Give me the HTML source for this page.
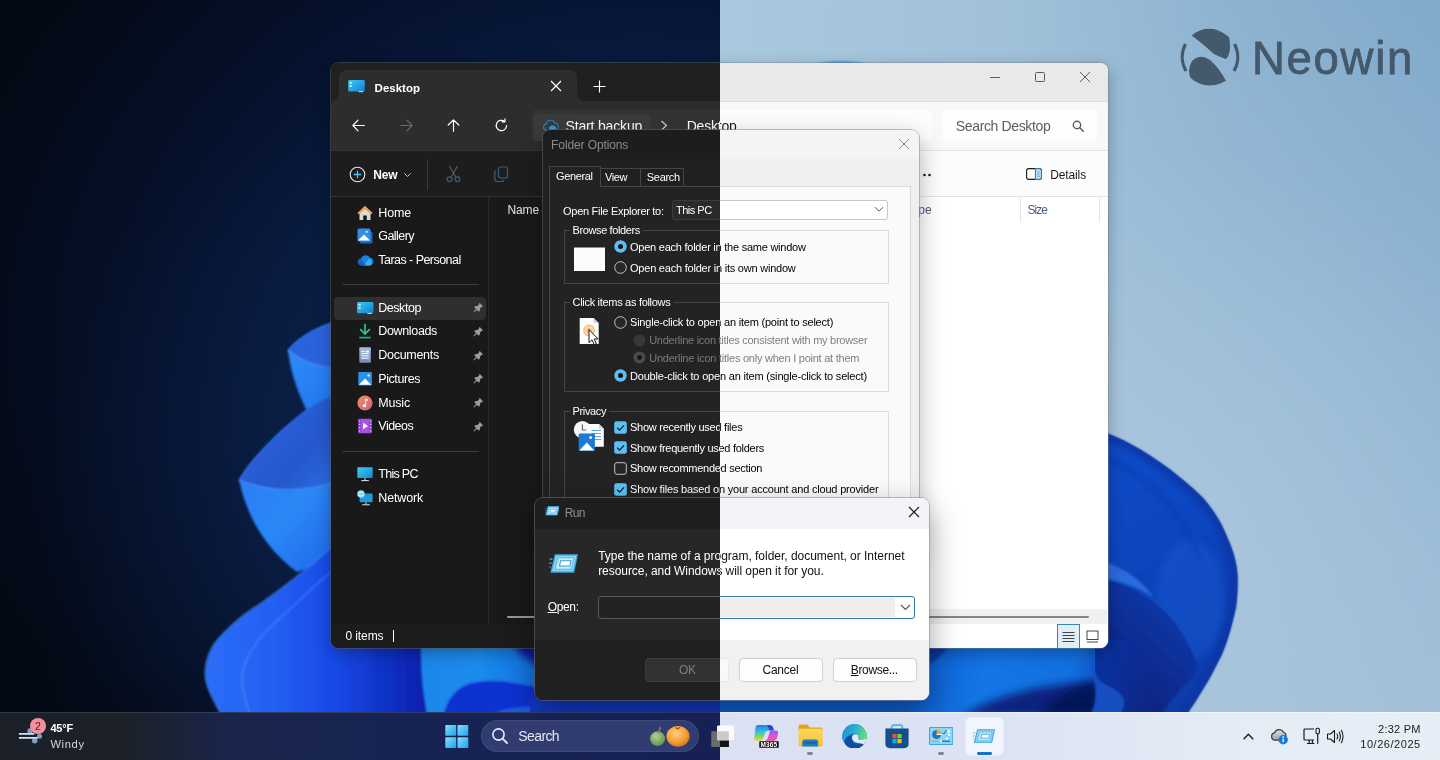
<!DOCTYPE html>
<html lang="en"><head><meta charset="utf-8"><title>Windows 11 dark and light mode dialogs</title>
<style>
html,body{margin:0;padding:0;background:#000;}
body{width:1440px;height:760px;overflow:hidden;position:relative;font-family:"Liberation Sans",sans-serif;}
.half{position:absolute;top:0;height:760px;width:720px;overflow:hidden;}
.half>.sc{position:absolute;top:0;width:1440px;height:760px;will-change:transform;}
.sc div,.sc svg{position:absolute;}
.sc div div{position:absolute;}
.t{white-space:nowrap;}
u{text-decoration:underline;text-underline-offset:1px;}
</style></head><body>
<div class="half" style="left:0"><div class="sc" style="left:0">
<div style="left:0px;top:0px;width:1440px;height:760px;background:radial-gradient(ellipse 300px 400px at 330px 520px,rgba(13,38,84,.55) 0%,rgba(13,38,84,.25) 50%,rgba(13,38,84,0) 100%),radial-gradient(ellipse 700px 580px at 640px 340px,#0c2452 0%,#0a1f47 30%,#08193b 50%,#061330 65%,#040d20 85%,#030915 100%);"></div>
<svg style="left:0px;top:0px;" width="1440" height="760" viewBox="0 0 1440 760">
<defs>
<linearGradient id="dA" gradientUnits="userSpaceOnUse" x1="205" y1="0" x2="425" y2="0"><stop offset="0" stop-color="#2b6ef7"/><stop offset="0.3" stop-color="#2360f3"/><stop offset="0.6" stop-color="#1748e6"/><stop offset="1" stop-color="#0920ac"/></linearGradient>
<linearGradient id="dB" gradientUnits="userSpaceOnUse" x1="235" y1="470" x2="340" y2="560"><stop offset="0" stop-color="#2a7df6"/><stop offset="0.5" stop-color="#2b88f6"/><stop offset="1" stop-color="#2068ea"/></linearGradient>
<linearGradient id="dBi" gradientUnits="userSpaceOnUse" x1="250" y1="410" x2="340" y2="490"><stop offset="0" stop-color="#2a62e0"/><stop offset="0.6" stop-color="#2858cc"/><stop offset="1" stop-color="#2a70ea"/></linearGradient>
<linearGradient id="dC" gradientUnits="userSpaceOnUse" x1="285" y1="350" x2="340" y2="430"><stop offset="0" stop-color="#2f8af8"/><stop offset="1" stop-color="#2272ee"/></linearGradient>
<linearGradient id="dD" gradientUnits="userSpaceOnUse" x1="420" y1="0" x2="540" y2="0"><stop offset="0" stop-color="#1a86ea"/><stop offset="0.5" stop-color="#1a8cec"/><stop offset="1" stop-color="#176fe2"/></linearGradient>
<filter id="b1" x="-5%" y="-5%" width="110%" height="110%"><feGaussianBlur stdDeviation="0.8"/></filter>
<filter id="b3" x="-10%" y="-10%" width="120%" height="120%"><feGaussianBlur stdDeviation="3"/></filter>
</defs>
<!-- top petal -->
<path d="M288 350 C292 386 310 426 340 455 L340 320 C318 326 300 336 288 350 Z" fill="url(#dC)" filter="url(#b1)"/>
<path d="M288 350 C300 336 318 327 340 321 L340 368 C320 368 302 362 288 350 Z" fill="#2a62dc" filter="url(#b1)"/>
<path d="M288 350 C302 362 320 368 340 368" fill="none" stroke="#4d9bff" stroke-width="1.2" opacity=".8" filter="url(#b1)"/>
<!-- middle petal -->
<path d="M239 480 C246 512 262 546 297 572 L340 560 L340 400 L312 406 C285 426 256 452 239 480 Z" fill="url(#dB)" filter="url(#b1)"/>
<path d="M239 480 C256 452 285 426 312 406 C322 400 332 396 340 394 L340 480 C305 494 268 492 239 480 Z" fill="url(#dBi)" filter="url(#b1)"/>
<path d="M239 480 C268 492 305 494 340 480" fill="none" stroke="#56a0ff" stroke-width="1.2" opacity=".8" filter="url(#b1)"/>
<!-- bottom petal + under-window -->
<path d="M345.0 540.0 C342.7 541.3 338.7 542.2 331.0 548.0 C323.3 553.8 309.8 566.3 299.0 575.0 C288.2 583.7 276.2 592.5 266.0 600.0 C255.8 607.5 247.0 612.0 238.0 620.0 C229.0 628.0 217.3 638.0 212.0 648.0 C206.7 658.0 204.3 668.7 206.0 680.0 C207.7 691.3 219.3 710.0 222.0 716.0 L430 716 L430 640 L345 640 Z" fill="url(#dA)" filter="url(#b1)"/>
<path d="M345.0 563.0 C342.8 564.3 341.2 563.3 332.0 571.0 C322.8 578.7 302.5 597.2 290.0 609.0 C277.5 620.8 265.0 630.8 257.0 642.0 C249.0 653.2 243.2 663.7 242.0 676.0 C240.8 688.3 248.7 709.3 250.0 716.0" fill="none" stroke="#5a9dff" stroke-opacity=".5" stroke-width="1.6" filter="url(#b1)"/>
<path d="M345.0 540.0 C342.7 541.3 338.7 542.2 331.0 548.0 C323.3 553.8 309.8 566.3 299.0 575.0 C288.2 583.7 276.2 592.5 266.0 600.0 C255.8 607.5 247.0 612.0 238.0 620.0 C229.0 628.0 217.3 638.0 212.0 648.0 C206.7 658.0 204.3 668.7 206.0 680.0 C207.7 691.3 219.3 710.0 222.0 716.0" fill="none" stroke="#4b93ff" stroke-opacity=".7" stroke-width="1.4" filter="url(#b1)"/>
<!-- cyan petal under window -->
<path d="M421 640 C420 665 422 690 427 716 L545 716 L545 640 Z" fill="url(#dD)" filter="url(#b1)"/>
<path d="M443 716 C446 700 455 688 470 683 C492 677 515 682 545 688 L545 716 Z" fill="#0d33d2" filter="url(#b1)"/>
<path d="M443 716 C446 700 455 688 470 683 C492 677 515 682 545 688" fill="none" stroke="#3f8df5" stroke-width="1.2" opacity=".8" filter="url(#b1)"/>
<path d="M492 716 C498 709 510 706 545 706 L545 716 Z" fill="#1a5ae0" filter="url(#b1)"/>
<path d="M512 640 L545 640 L545 668 C530 664 518 654 512 640 Z" fill="#0b22a4" filter="url(#b3)"/>
<rect x="530" y="698" width="190" height="18" fill="#1238c4"/>
</svg>
<div style="left:331px;top:63px;width:777px;height:585px;background:#191919;border-radius:8px;box-shadow:0 0 0 1px rgba(90,90,90,.55),0 5px 16px rgba(0,0,0,.30);"></div>
<div style="left:331px;top:63px;width:777px;height:585px;border-radius:8px;overflow:hidden;"><div style="left:0px;top:0px;width:777px;height:38px;background:#202020;"></div>
<div style="left:0px;top:38px;width:777px;height:49px;background:#2d2d2d;"></div>
<div style="left:0px;top:87px;width:777px;height:1px;background:#333333;"></div>
<div style="left:0px;top:88px;width:777px;height:45px;background:#1d1d1d;"></div>
<div style="left:0px;top:133px;width:777px;height:1px;background:#333333;"></div>
<div style="left:0px;top:134px;width:777px;height:427px;background:#191919;"></div>
<div style="left:0px;top:561px;width:777px;height:24px;background:#1c1c1c;"></div>
</div>
<div style="left:339px;top:70px;width:238px;height:31px;background:#2d2d2d;border-radius:8px 8px 0 0;"></div>
<svg style="left:331px;top:93px;" width="8" height="8" viewBox="0 0 8 8"><path d="M8 0 L8 8 L0 8 A8 8 0 0 0 8 0Z" fill="#2d2d2d"/></svg>
<svg style="left:577px;top:93px;" width="8" height="8" viewBox="0 0 8 8"><path d="M0 0 L0 8 L8 8 A8 8 0 0 1 0 0Z" fill="#2d2d2d"/></svg>
<svg style="left:348px;top:80px;" width="17" height="12.5" viewBox="0 0 16 12"><defs><linearGradient id="gdk34880" x1="0" y1="0" x2="1" y2="1"><stop offset="0" stop-color="#3ccbf4"/><stop offset="1" stop-color="#0f7fd0"/></linearGradient></defs>
<rect x="0" y="0" width="16" height="11" rx="1.5" fill="url(#gdk34880)"/><rect x="1.5" y="2" width="2" height="1.6" fill="#dff6ff"/><rect x="1.5" y="5" width="2" height="1.6" fill="#dff6ff"/><rect x="10" y="10.5" width="4.5" height="1.2" fill="#9fdcf6"/></svg>
<div class="t" style="left:374.6px;top:77.6px;line-height:20px;font-size:11.5px;font-weight:700;color:#fff;letter-spacing:0.00px;">Desktop</div>
<svg style="left:550px;top:80px;" width="12" height="12" viewBox="0 0 12 12"><path d="M1 1 L11 11 M11 1 L1 11" stroke="#fff" stroke-width="1.2" fill="none"/></svg>
<svg style="left:593px;top:80px;" width="13" height="13" viewBox="0 0 13 13"><path d="M6.5 0.5 V12.5 M0.5 6.5 H12.5" stroke="#fff" stroke-width="1.1" fill="none"/></svg>
<svg style="left:352px;top:119px;" width="13" height="13" viewBox="0 0 13 13"><path d="M12.3 6.5 H1.2 M6 1.2 L0.9 6.5 L6 11.8" stroke="#fff" stroke-width="1.2" fill="none" stroke-linecap="round" stroke-linejoin="round"/></svg>
<svg style="left:400px;top:119px;" width="13" height="13" viewBox="0 0 13 13"><path d="M0.7 6.5 H11.8 M7 1.2 L12.1 6.5 L7 11.8" stroke="#6a6a6a" stroke-width="1.2" fill="none" stroke-linecap="round" stroke-linejoin="round"/></svg>
<svg style="left:446.8px;top:118.8px;" width="13" height="13" viewBox="0 0 13 13"><path d="M6.5 12.3 V1.2 M1.2 6 L6.5 0.9 L11.8 6" stroke="#fff" stroke-width="1.2" fill="none" stroke-linecap="round" stroke-linejoin="round"/></svg>
<svg style="left:494px;top:118px;" width="15" height="15" viewBox="0 0 15 15"><path d="M12.6 7.6 A5.2 5.2 0 1 1 10.6 3.4 M11 0.9 V3.8 H8.1" stroke="#fff" stroke-width="1.2" fill="none" stroke-linecap="round" stroke-linejoin="round"/></svg>
<div style="left:532px;top:110px;width:188px;height:31px;background:#343434;border-radius:4px 0 0 4px;"></div>
<div style="left:534px;top:114px;width:117px;height:27px;background:#3b3b3b;border-radius:4px;"></div>
<svg style="left:542px;top:118.5px;" width="19" height="13" viewBox="0 0 19 13"><path d="M5 11.2 H4.2 A3.2 3.2 0 0 1 4.2 4.900 A4.600 4.600 0 0 1 13 4.200 A3.400 3.400 0 0 1 15.4 10" stroke="#2c7fbc" stroke-width="1.2" fill="none" stroke-linecap="round"/><circle cx="10.6" cy="10" r="3.600" fill="#3596d8"/></svg>
<div class="t" style="left:565.5px;top:115.5px;line-height:20px;font-size:14px;color:#fff;letter-spacing:-0.16px;">Start backup</div>
<svg style="left:660px;top:120px;" width="8" height="11" viewBox="0 0 8 11"><path d="M1.5 1 L6.5 5.5 L1.5 10" stroke="#d0d0d0" stroke-width="1.2" fill="none"/></svg>
<div class="t" style="left:686.7px;top:115.5px;line-height:20px;font-size:14px;color:#fff;letter-spacing:-0.19px;">Desktop</div>
<svg style="left:349px;top:165.5px;" width="17" height="17" viewBox="0 0 17 17"><circle cx="8.5" cy="8.5" r="7.3" stroke="#e8e8e8" stroke-width="1.1" fill="none"/><path d="M8.5 4.8 V12.2 M4.8 8.5 H12.2" stroke="#4cc2ff" stroke-width="1.3"/></svg>
<div class="t" style="left:373.2px;top:165.2px;line-height:20px;font-size:12px;font-weight:700;color:#fff;letter-spacing:-0.16px;">New</div>
<svg style="left:403px;top:171.5px;" width="9" height="7" viewBox="0 0 9 7"><path d="M1.5 1.5 L4.500 4.500 L7.500 1.5" stroke="#c8c8c8" stroke-width="1" fill="none"/></svg>
<div style="left:427px;top:159px;width:1px;height:31px;background:#3a3a3a;"></div>
<svg style="left:445px;top:165px;" width="17" height="18" viewBox="0 0 17 18"><path d="M4.5 1 L11 12.5 M12.5 1 L6 12.5" stroke="#5b5f63" stroke-width="1.1" fill="none"/><circle cx="4.6" cy="14.2" r="2.4" stroke="#2c6384" stroke-width="1.2" fill="none"/><circle cx="12.4" cy="14.2" r="2.4" stroke="#2c6384" stroke-width="1.2" fill="none"/></svg>
<svg style="left:493px;top:166px;" width="17" height="17" viewBox="0 0 17 17"><rect x="5.5" y="1" width="9" height="11" rx="2" stroke="#2c6384" stroke-width="1.2" fill="none"/><path d="M3.5 4.5 A2 2 0 0 0 1.8 6.5 V13 A2.5 2.5 0 0 0 4.3 15.5 H9 A2 2 0 0 0 11 14" stroke="#585858" stroke-width="1.2" fill="none"/></svg>
<div style="left:488px;top:197px;width:1px;height:427px;background:#2a2a2a;"></div>
<div style="left:334px;top:296.5px;width:152px;height:23px;background:#2f2f2f;border-radius:4px;"></div>
<div style="left:342px;top:284px;width:137px;height:1px;background:#3a3a3a;"></div>
<div style="left:342px;top:450.5px;width:137px;height:1px;background:#3a3a3a;"></div>
<div class="t" style="left:378.3px;top:202.5px;line-height:20px;font-size:12.5px;color:#fff;letter-spacing:-0.16px;">Home</div>
<svg style="left:357px;top:204.5px;" width="16" height="16" viewBox="0 0 16 16"><path d="M8 1 L15.5 8 L14 9.3 L8 3.8 L2 9.3 L0.5 8 Z" fill="#e8964a"/><path d="M2.5 8.3 L8 3.4 L13.5 8.3 V15 H9.8 V10.5 H6.2 V15 H2.5 Z" fill="#d9d9d9"/><path d="M8 1 L15.5 8 L14 9.3 L8 3.8 L2 9.3 L0.5 8 Z" fill="#ee9c50"/></svg>
<div class="t" style="left:378.3px;top:226.3px;line-height:20px;font-size:12.5px;color:#fff;letter-spacing:-0.57px;">Gallery</div>
<svg style="left:357px;top:228.3px;" width="16" height="16" viewBox="0 0 16 16"><rect x="3" y="3.5" width="12.5" height="12" rx="1.5" fill="#2560b8"/><rect x="0.5" y="0.5" width="13" height="13" rx="1.5" fill="#2d8fe6"/><path d="M1 12.5 L7 6.5 L13 12.5 Z" fill="#fff"/><circle cx="9.7" cy="3.8" r="1.1" fill="#e6f4ff"/></svg>
<div class="t" style="left:378.3px;top:250px;line-height:20px;font-size:12.5px;color:#fff;letter-spacing:-0.54px;">Taras - Personal</div>
<svg style="left:357px;top:252px;" width="17" height="16" viewBox="0 0 17 16"><path d="M4.3 13.5 A3.6 3.6 0 0 1 3.9 6.4 A5 5 0 0 1 12.8 5.6 A4 4 0 0 1 12.9 13.5 Z" fill="#1f7fe0"/><path d="M7 13.5 L12 6.5 A4.2 4.2 0 0 1 13 13.5 Z" fill="#35b6f6"/><path d="M4.3 13.5 A3.4 3.4 0 0 1 3.6 7.2 L9.5 13.5 Z" fill="#1560c8"/></svg>
<div class="t" style="left:378.3px;top:297.6px;line-height:20px;font-size:12.5px;color:#fff;letter-spacing:-0.47px;">Desktop</div>
<svg style="left:472.5px;top:302.1px;" width="11" height="11" viewBox="0 0 11 11"><path d="M6.5 0.8 L10.2 4.5 L8.6 5 L7 6.6 L6.8 9 L5.6 9.6 L3.9 7.9 L1 10.6 L0.4 10 L3.1 7.1 L1.4 5.4 L2 4.2 L4.4 4 L6 2.4 Z" fill="#9b9b9b"/></svg>
<svg style="left:357px;top:301.6px;" width="16.5" height="12.4" viewBox="0 0 16 12"><defs><linearGradient id="gdk357301.6" x1="0" y1="0" x2="1" y2="1"><stop offset="0" stop-color="#3ccbf4"/><stop offset="1" stop-color="#0f7fd0"/></linearGradient></defs>
<rect x="0" y="0" width="16" height="11" rx="1.5" fill="url(#gdk357301.6)"/><rect x="1.5" y="2" width="2" height="1.6" fill="#dff6ff"/><rect x="1.5" y="5" width="2" height="1.6" fill="#dff6ff"/><rect x="10" y="10.5" width="4.5" height="1.2" fill="#9fdcf6"/></svg>
<div class="t" style="left:378.3px;top:321.4px;line-height:20px;font-size:12.5px;color:#fff;letter-spacing:-0.35px;">Downloads</div>
<svg style="left:472.5px;top:325.9px;" width="11" height="11" viewBox="0 0 11 11"><path d="M6.5 0.8 L10.2 4.5 L8.6 5 L7 6.6 L6.8 9 L5.6 9.6 L3.9 7.9 L1 10.6 L0.4 10 L3.1 7.1 L1.4 5.4 L2 4.2 L4.4 4 L6 2.4 Z" fill="#9b9b9b"/></svg>
<svg style="left:357px;top:323.4px;" width="16" height="16" viewBox="0 0 16 16"><path d="M8 0.8 V10.5 M3.2 6.2 L8 11 L12.8 6.2" stroke="#2dc49a" stroke-width="1.7" fill="none"/><path d="M2.3 14.6 H13.7" stroke="#2aa886" stroke-width="1.7"/></svg>
<div class="t" style="left:378.3px;top:345.2px;line-height:20px;font-size:12.5px;color:#fff;letter-spacing:-0.29px;">Documents</div>
<svg style="left:472.5px;top:349.7px;" width="11" height="11" viewBox="0 0 11 11"><path d="M6.5 0.8 L10.2 4.5 L8.6 5 L7 6.6 L6.8 9 L5.6 9.6 L3.9 7.9 L1 10.6 L0.4 10 L3.1 7.1 L1.4 5.4 L2 4.2 L4.4 4 L6 2.4 Z" fill="#9b9b9b"/></svg>
<svg style="left:357px;top:347.2px;" width="16" height="16" viewBox="0 0 16 16"><defs><linearGradient id="gdoc" x1="0" y1="0" x2="0" y2="1"><stop offset="0" stop-color="#a9bcd8"/><stop offset="1" stop-color="#6f8db8"/></linearGradient></defs><rect x="2.3" y="0.3" width="11.6" height="15.4" rx="1" fill="url(#gdoc)"/><path d="M4.3 4.3 H8.2 M4.3 6.6 H11.8 M4.3 8.9 H11.8 M4.3 11.2 H11.8" stroke="#fff" stroke-width="1"/><rect x="9" y="3.6" width="2.8" height="1.8" fill="#fff"/></svg>
<div class="t" style="left:378.3px;top:368.9px;line-height:20px;font-size:12.5px;color:#fff;letter-spacing:-0.43px;">Pictures</div>
<svg style="left:472.5px;top:373.4px;" width="11" height="11" viewBox="0 0 11 11"><path d="M6.5 0.8 L10.2 4.5 L8.6 5 L7 6.6 L6.8 9 L5.6 9.6 L3.9 7.9 L1 10.6 L0.4 10 L3.1 7.1 L1.4 5.4 L2 4.2 L4.4 4 L6 2.4 Z" fill="#9b9b9b"/></svg>
<svg style="left:357px;top:370.9px;" width="16" height="16" viewBox="0 0 16 16"><rect x="1.3" y="1" width="13.6" height="13.6" rx="1.3" fill="#2a92e8"/><path d="M2 13.8 L8 7.6 L14.2 13.8 Z" fill="#fff"/><circle cx="11.6" cy="4.4" r="1.2" fill="#e4f3ff"/></svg>
<div class="t" style="left:378.3px;top:392.6px;line-height:20px;font-size:12.5px;color:#fff;letter-spacing:-0.19px;">Music</div>
<svg style="left:472.5px;top:397.1px;" width="11" height="11" viewBox="0 0 11 11"><path d="M6.5 0.8 L10.2 4.5 L8.6 5 L7 6.6 L6.8 9 L5.6 9.6 L3.9 7.9 L1 10.6 L0.4 10 L3.1 7.1 L1.4 5.4 L2 4.2 L4.4 4 L6 2.4 Z" fill="#9b9b9b"/></svg>
<svg style="left:357px;top:394.6px;" width="16" height="16" viewBox="0 0 16 16"><defs><linearGradient id="gmu" x1="0" y1="0" x2="1" y2="1"><stop offset="0" stop-color="#f09060"/><stop offset="1" stop-color="#d0608a"/></linearGradient></defs><circle cx="8" cy="8" r="7.6" fill="url(#gmu)"/><path d="M8.3 3.6 L11 4.6 V6 L9.1 5.3 V10.8 A1.7 1.5 0 1 1 8.3 9.5 Z" fill="#fff"/></svg>
<div class="t" style="left:378.3px;top:416.3px;line-height:20px;font-size:12.5px;color:#fff;letter-spacing:-0.53px;">Videos</div>
<svg style="left:472.5px;top:420.8px;" width="11" height="11" viewBox="0 0 11 11"><path d="M6.5 0.8 L10.2 4.5 L8.6 5 L7 6.6 L6.8 9 L5.6 9.6 L3.9 7.9 L1 10.6 L0.4 10 L3.1 7.1 L1.4 5.4 L2 4.2 L4.4 4 L6 2.4 Z" fill="#9b9b9b"/></svg>
<svg style="left:357px;top:418.3px;" width="16" height="16" viewBox="0 0 16 16"><rect x="1.3" y="0.8" width="13.6" height="14.4" rx="1.5" fill="#a855e0"/><rect x="1.3" y="0.8" width="2.6" height="14.4" fill="#8a3cc8"/><rect x="12.3" y="0.8" width="2.6" height="14.4" fill="#8a3cc8"/><path d="M6 4.8 L11 8 L6 11.2 Z" fill="#fff"/><path d="M2.6 3 v.1 M2.6 6.3 v.1 M2.6 9.6 v.1 M2.6 12.9 v.1 M13.6 3 v.1 M13.6 6.3 v.1 M13.6 9.6 v.1 M13.6 12.9 v.1" stroke="#e8d0ff" stroke-width="1.1" stroke-linecap="square"/></svg>
<div class="t" style="left:378.3px;top:463.8px;line-height:20px;font-size:12.5px;color:#fff;letter-spacing:-0.71px;">This PC</div>
<svg style="left:357px;top:465.8px;" width="16" height="16" viewBox="0 0 16 16"><defs><linearGradient id="gpc" x1="0" y1="0" x2="1" y2="1"><stop offset="0" stop-color="#3fd0e8"/><stop offset="1" stop-color="#1585d8"/></linearGradient></defs><rect x="0.3" y="1.3" width="15.4" height="10.6" rx="0.8" fill="url(#gpc)"/><rect x="7.3" y="11.9" width="1.4" height="2.3" fill="#9ab"/><rect x="4.2" y="14" width="7.6" height="1.1" fill="#c8d4dc"/></svg>
<div class="t" style="left:378.3px;top:487.5px;line-height:20px;font-size:12.5px;color:#fff;letter-spacing:-0.15px;">Network</div>
<svg style="left:357px;top:489.5px;" width="16" height="16" viewBox="0 0 16 16"><rect x="2.6" y="3.6" width="13" height="8.6" rx="0.8" fill="#1e9be0"/><rect x="8.3" y="12.2" width="1.4" height="2.2" fill="#9ab"/><rect x="5.2" y="14.2" width="7.6" height="1.1" fill="#c8d4dc"/><circle cx="4" cy="4" r="3.8" fill="#8fd4f2"/><path d="M1.5 3 Q4 1 6.5 3 M1 5.2 Q4 7 7 5.2" stroke="#e8f8ff" stroke-width=".8" fill="none"/></svg>
<div class="t" style="left:507.5px;top:199.5px;line-height:20px;font-size:12px;color:#e4e4e4;letter-spacing:-0.13px;">Name</div>
<div style="left:507px;top:615.5px;width:30px;height:2px;background:#9a9a9a;border-radius:1px;"></div>
<div class="t" style="left:345.5px;top:626px;line-height:20px;font-size:12px;color:#fff;letter-spacing:-0.10px;">0 items</div>
<div style="left:393px;top:630px;width:1px;height:12px;background:#fff;"></div>
<div style="left:543px;top:130px;width:376px;height:420px;background:#202020;border-radius:8px;box-shadow:0 0 0 1px rgba(85,85,85,.7),0 8px 24px rgba(0,0,0,.3);overflow:hidden;"><div style="left:0px;top:0px;width:376px;height:29px;background:#1d1d1d;"></div>
</div>
<div style="left:549px;top:186.4px;width:362px;height:331px;background:#232323;box-sizing:border-box;border:1px solid #454545;"></div>
<div class="t" style="left:551.1px;top:134.8px;line-height:20px;font-size:12px;color:#8a8a8a;letter-spacing:-0.11px;">Folder Options</div>
<div style="left:549px;top:166px;width:52px;height:21.4px;background:#232323;box-sizing:border-box;border:1px solid #454545;border-bottom:none;"></div>
<div style="left:601px;top:168px;width:40px;height:18.4px;background:#202020;box-sizing:border-box;border:1px solid #454545;border-left:none;border-bottom:none;"></div>
<div style="left:641px;top:168px;width:43px;height:18.4px;background:#202020;box-sizing:border-box;border:1px solid #454545;border-left:none;border-bottom:none;"></div>
<div class="t" style="left:556px;top:165.8px;line-height:20px;font-size:11px;color:#ffffff;letter-spacing:-0.35px;">General</div>
<div class="t" style="left:605px;top:167.4px;line-height:20px;font-size:11px;color:#ffffff;letter-spacing:-0.39px;">View</div>
<div class="t" style="left:646.8px;top:167.4px;line-height:20px;font-size:11px;color:#ffffff;letter-spacing:-0.31px;">Search</div>
<div class="t" style="left:563.1px;top:200.5px;line-height:20px;font-size:11px;color:#ffffff;letter-spacing:-0.29px;">Open File Explorer to:</div>
<div style="left:672px;top:199.8px;width:216px;height:20px;background:#2a2a2a;box-sizing:border-box;border:1px solid #3d3d3d;border-radius:3px;"></div>
<div class="t" style="left:676px;top:199.8px;line-height:20px;font-size:11px;color:#ffffff;letter-spacing:-0.50px;">This PC</div>
<div style="left:563.5px;top:230px;width:325.5px;height:53.5px;box-sizing:border-box;border:1px solid #454545;"></div>
<div style="left:569.5px;top:228px;width:73.4px;height:5px;background:#232323;"></div>
<div class="t" style="left:572.5px;top:220.3px;line-height:20px;font-size:11px;color:#ffffff;letter-spacing:-0.38px;">Browse folders</div>
<div style="left:563.5px;top:302px;width:325.5px;height:89.5px;box-sizing:border-box;border:1px solid #454545;"></div>
<div style="left:569.5px;top:300px;width:104px;height:5px;background:#232323;"></div>
<div class="t" style="left:572.5px;top:292.3px;line-height:20px;font-size:11px;color:#ffffff;letter-spacing:-0.30px;">Click items as follows</div>
<div style="left:563.5px;top:410.5px;width:325.5px;height:109.5px;box-sizing:border-box;border:1px solid #454545;"></div>
<div style="left:569.5px;top:408.5px;width:39.7px;height:5px;background:#232323;"></div>
<div class="t" style="left:572.5px;top:400.8px;line-height:20px;font-size:11px;color:#ffffff;letter-spacing:-0.34px;">Privacy</div>
<svg style="left:614.0px;top:240.4px;" width="13" height="13" viewBox="0 0 13 13"><circle cx="6.5" cy="6.5" r="6.2" fill="#5cc0f5"/><circle cx="6.5" cy="6.5" r="2.5" fill="#101010"/></svg>
<div class="t" style="left:630px;top:236.9px;line-height:20px;font-size:11px;color:#ffffff;letter-spacing:-0.24px;">Open each folder in the same window</div>
<svg style="left:614.0px;top:261.0px;" width="13" height="13" viewBox="0 0 13 13"><circle cx="6.5" cy="6.5" r="5.8" fill="#262626" stroke="#c4c4c4" stroke-width="1"/></svg>
<div class="t" style="left:630px;top:257.5px;line-height:20px;font-size:11px;color:#ffffff;letter-spacing:-0.22px;">Open each folder in its own window</div>
<svg style="left:614.0px;top:315.8px;" width="13" height="13" viewBox="0 0 13 13"><circle cx="6.5" cy="6.5" r="5.8" fill="#262626" stroke="#c4c4c4" stroke-width="1"/></svg>
<div class="t" style="left:630px;top:312.2px;line-height:20px;font-size:11px;color:#ffffff;letter-spacing:-0.21px;">Single-click to open an item (point to select)</div>
<svg style="left:632.8px;top:333.5px;" width="13" height="13" viewBox="0 0 13 13"><circle cx="6.5" cy="6.5" r="6" fill="#383838"/></svg>
<div class="t" style="left:649.2px;top:329.9px;line-height:20px;font-size:11px;color:#7a7a7a;letter-spacing:-0.27px;">Underline icon titles consistent with my browser</div>
<svg style="left:632.8px;top:351.4px;" width="13" height="13" viewBox="0 0 13 13"><circle cx="6.5" cy="6.5" r="6" fill="#4a4a4a"/><circle cx="6.5" cy="6.5" r="2.4" fill="#151515"/></svg>
<div class="t" style="left:649.2px;top:348px;line-height:20px;font-size:11px;color:#7a7a7a;letter-spacing:-0.24px;">Underline icon titles only when I point at them</div>
<svg style="left:614.0px;top:369.1px;" width="13" height="13" viewBox="0 0 13 13"><circle cx="6.5" cy="6.5" r="6.2" fill="#5cc0f5"/><circle cx="6.5" cy="6.5" r="2.5" fill="#101010"/></svg>
<div class="t" style="left:630px;top:365.8px;line-height:20px;font-size:11px;color:#ffffff;letter-spacing:-0.19px;">Double-click to open an item (single-click to select)</div>
<svg style="left:613.9px;top:420.5px;" width="13" height="13" viewBox="0 0 13 13"><rect x="0.2" y="0.2" width="12.6" height="12.6" rx="2.2" fill="#5cc0f5"/><path d="M3.2 6.8 L5.6 9.1 L10 4.3" stroke="#0b1a26" stroke-width="1.2" fill="none"/></svg>
<div class="t" style="left:630px;top:417.2px;line-height:20px;font-size:11px;color:#ffffff;letter-spacing:-0.26px;">Show recently used files</div>
<svg style="left:613.9px;top:440.9px;" width="13" height="13" viewBox="0 0 13 13"><rect x="0.2" y="0.2" width="12.6" height="12.6" rx="2.2" fill="#5cc0f5"/><path d="M3.2 6.8 L5.6 9.1 L10 4.3" stroke="#0b1a26" stroke-width="1.2" fill="none"/></svg>
<div class="t" style="left:630px;top:437.7px;line-height:20px;font-size:11px;color:#ffffff;letter-spacing:-0.28px;">Show frequently used folders</div>
<svg style="left:613.9px;top:462.0px;" width="13" height="13" viewBox="0 0 13 13"><rect x="0.7" y="0.7" width="11.6" height="11.6" rx="2.2" fill="#262626" stroke="#c4c4c4" stroke-width="1"/></svg>
<div class="t" style="left:630px;top:458.3px;line-height:20px;font-size:11px;color:#ffffff;letter-spacing:-0.28px;">Show recommended section</div>
<svg style="left:613.9px;top:483.0px;" width="13" height="13" viewBox="0 0 13 13"><rect x="0.2" y="0.2" width="12.6" height="12.6" rx="2.2" fill="#5cc0f5"/><path d="M3.2 6.8 L5.6 9.1 L10 4.3" stroke="#0b1a26" stroke-width="1.2" fill="none"/></svg>
<div class="t" style="left:630px;top:478.7px;line-height:20px;font-size:11px;color:#ffffff;letter-spacing:-0.19px;">Show files based on your account and cloud provider</div>
<div style="left:574px;top:246.6px;width:30.8px;height:24.2px;background:#fcfcfc;box-sizing:border-box;border-top:1.4px solid #8e8e8e;"></div>
<svg style="left:579px;top:317px;" width="23" height="30" viewBox="0 0 23 30"><defs><radialGradient id="gclk"><stop offset="0" stop-color="#f08a10"/><stop offset=".3" stop-color="#f6c078"/><stop offset=".62" stop-color="#fbe3c0"/><stop offset=".8" stop-color="#eeb060"/><stop offset="1" stop-color="#fbe8d0" stop-opacity=".3"/></radialGradient></defs><path d="M0.700 0.900 H14.5 L19.7 6.100 V26.9 H0.700 Z" fill="#fcfcfc"/><path d="M14.5 0.900 V6.100 H19.7 Z" fill="#d4d4d4"/><circle cx="10" cy="13.5" r="6.400" fill="url(#gclk)"/><path d="M10 12.6 V25.6 L13 22.800 L15.3 27.6 L17.3 26.6 L15.100 22 H19.100 Z" fill="#fff" stroke="#1a1a1a" stroke-width="1"/></svg>
<svg style="left:573px;top:421px;" width="32" height="31" viewBox="0 0 32 31"><circle cx="9.400" cy="8.600" r="8.600" fill="#f6f6f6"/><path d="M9.400 3.400 V9 H13" stroke="#666" stroke-width="1.2" fill="none"/><path d="M15 3 H26 L30.8 7.800 V25.7 H15 Z" fill="#fcfcfc"/><path d="M26 3 V7.800 H30.8 Z" fill="#d6d6d6"/><path d="M18.5 9.500 H28 M18.5 12.5 H28 M22 15.5 H28 M22 18.5 H28" stroke="#5aa8e2" stroke-width="1.1"/><rect x="5.700" y="12.4" width="16.2" height="17.6" rx="1.2" fill="#1d7ad4"/><path d="M6.400 29.6 L13.8 21.4 L21.2 29.6 Z" fill="#fff"/><circle cx="17.6" cy="16.6" r="1.5" fill="#e4f2ff"/></svg>
<div style="left:535px;top:497.5px;width:394px;height:202.0px;background:#272727;border-radius:8px;overflow:hidden;box-shadow:0 0 0 1px rgba(95,95,95,.7),0 12px 32px rgba(0,0,0,.38);"><div style="left:0px;top:0px;width:394px;height:31px;background:#1f1f1f;"></div>
<div style="left:0px;top:31px;width:394px;height:111.5px;background:#272727;"></div>
<div style="left:0px;top:142.5px;width:394px;height:59.5px;background:#202020;"></div>
</div>
<div class="t" style="left:598.2px;top:545.5px;line-height:20px;font-size:12px;color:#ffffff;letter-spacing:-0.02px;">Type the name of a program, folder, document, or Internet</div>
<div class="t" style="left:598.2px;top:560.5px;line-height:20px;font-size:12px;color:#ffffff;letter-spacing:-0.06px;">resource, and Windows will open it for you.</div>
<div style="left:598px;top:596px;width:317px;height:22.5px;background:#232323;box-sizing:border-box;border:1px solid #5a5a5a;border-radius:3px;"></div>
<div style="left:645px;top:658px;width:84px;height:23.5px;background:#323232;box-sizing:border-box;border:1px solid #3d3d3d;border-radius:4px;"></div>
<svg style="left:544.5px;top:505.4px;" width="14.5" height="11.6" viewBox="0 0 22 14.6"><path d="M4.6 0.8 H21.4 L18.6 13.8 H1.4 Z" fill="#8fd6f6" stroke="#3fa6dc" stroke-width="1.1"/><path d="M6.6 2.9 H18.9 L17 11.7 H4.2 Z" fill="#c4ebfc" stroke="#58b6e4" stroke-width=".8"/><path d="M8.6 5.2 H16.6 L15.8 9.2 H7.8 Z" fill="#ffffff" stroke="#3a9ad2" stroke-width=".8"/><path d="M0.2 4 H2.4 M0 7 H1.7 M0 10 H1" stroke="#58b6e4" stroke-width=".9"/></svg>
<div class="t" style="left:564.7px;top:502.9px;line-height:20px;font-size:12px;color:#8d8d8d;letter-spacing:-0.67px;">Run</div>
<svg style="left:548.6px;top:554.4px;" width="29.4" height="19" viewBox="0 0 22 14.6"><path d="M4.6 0.8 H21.4 L18.6 13.8 H1.4 Z" fill="#8fd6f6" stroke="#3fa6dc" stroke-width="1.1"/><path d="M6.6 2.9 H18.9 L17 11.7 H4.2 Z" fill="#c4ebfc" stroke="#58b6e4" stroke-width=".8"/><path d="M8.6 5.2 H16.6 L15.8 9.2 H7.8 Z" fill="#ffffff" stroke="#3a9ad2" stroke-width=".8"/><path d="M0.2 4 H2.4 M0 7 H1.7 M0 10 H1" stroke="#58b6e4" stroke-width=".9"/></svg>
<div class="t" style="left:547.7px;top:597.3px;line-height:20px;font-size:12px;color:#ffffff;letter-spacing:-0.34px;"><u>O</u>pen:</div>
<div class="t" style="left:679.1px;top:659.8px;line-height:20px;font-size:12px;color:#7d7d7d;letter-spacing:-0.42px;">OK</div>
<div style="left:0px;top:712px;width:1440px;height:48px;background:linear-gradient(90deg,#1c2028 0%,#1c212a 9%,#19254a 16%,#172452 26%,#162153 45%,#162052 50%,#162052 100%);"></div>
<div style="left:0px;top:712px;width:1440px;height:1px;background:rgba(255,255,255,.10);"></div>
<svg style="left:18px;top:726px;" width="26" height="18" viewBox="0 0 26 18"><circle cx="12" cy="5" r="2.700" fill="#7f9fc4"/><circle cx="21.5" cy="10.2" r="2.500" fill="#7f9fc4"/><circle cx="16.7" cy="14.7" r="2.700" fill="#7f9fc4"/><path d="M0.900 7.900 H16.3 M0.900 11.9 H19.800" stroke="#d6e2ef" stroke-width="1.600"/><path d="M0.900 9.900 H18" stroke="#16263f" stroke-width="1.200"/></svg>
<div style="left:29.6px;top:717.6px;width:16.4px;height:16.4px;background:#f48f9e;border-radius:50%;"></div>
<div class="t" style="left:34.9px;top:715.9px;line-height:20px;font-size:10.5px;color:#6a0c1a;">2</div>
<div class="t" style="left:50.4px;top:718.4px;line-height:20px;font-size:11px;font-weight:700;color:#ffffff;letter-spacing:-0.14px;">45°F</div>
<div class="t" style="left:50.4px;top:733.8px;line-height:20px;font-size:11.2px;color:#d2d6dc;letter-spacing:0.64px;">Windy</div>
<svg style="left:445.4px;top:725.2px;" width="23.6" height="23" viewBox="0 0 24 24"><defs><linearGradient id="gws" x1="0" y1="0" x2="1" y2="1"><stop offset="0" stop-color="#86e2ff"/><stop offset="1" stop-color="#18a2ee"/></linearGradient></defs><rect x="0" y="0" width="11.3" height="11.3" rx="0.8" fill="url(#gws)"/><rect x="12.7" y="0" width="11.3" height="11.3" rx="0.8" fill="url(#gws)"/><rect x="0" y="12.7" width="11.3" height="11.3" rx="0.8" fill="url(#gws)"/><rect x="12.7" y="12.7" width="11.3" height="11.3" rx="0.8" fill="url(#gws)"/></svg>
<div style="left:481px;top:720px;width:218px;height:31.6px;background:#313c70;border-radius:16px;box-shadow:inset 0 0 0 1px rgba(255,255,255,.07);"></div>
<svg style="left:491px;top:727px;" width="18" height="18" viewBox="0 0 18 18"><circle cx="7.5" cy="7.5" r="5.6" stroke="#e8ecf8" stroke-width="1.6" fill="none"/><path d="M11.8 11.8 L16 16" stroke="#e8ecf8" stroke-width="1.8" stroke-linecap="round"/></svg>
<div class="t" style="left:518.3px;top:726.3px;line-height:20px;font-size:14px;color:#e4e8f6;letter-spacing:-0.61px;">Search</div>
<svg style="left:648px;top:722px;" width="44" height="26" viewBox="0 0 44 26"><defs><radialGradient id="gor" cx=".42" cy=".35" r=".75"><stop offset="0" stop-color="#ffcf80"/><stop offset=".6" stop-color="#f59a32"/><stop offset="1" stop-color="#c9681a"/></radialGradient><radialGradient id="ggr" cx=".4" cy=".35" r=".75"><stop offset="0" stop-color="#a9d38e"/><stop offset="1" stop-color="#588f48"/></radialGradient></defs><ellipse cx="9.6" cy="16.6" rx="7.5" ry="7.3" fill="url(#ggr)"/><path d="M10.6 10.6 L12.4 5.400" stroke="#a07868" stroke-width="1.500" stroke-linecap="round"/><ellipse cx="30" cy="14.3" rx="11.6" ry="10.4" fill="url(#gor)"/><path d="M27.4 5.4 L29.6 7 L32 5.2" stroke="#a85a10" stroke-width="1.3" fill="none"/></svg>
<svg style="left:711px;top:725px;" width="24" height="23" viewBox="0 0 24 23"><rect x="0.2" y="6.3" width="17.7" height="15.7" rx="0.8" fill="#6b6b70"/><rect x="8.9" y="15.3" width="9" height="6.7" fill="#141414"/><rect x="6" y="0.4" width="17.1" height="14.9" rx="1.2" fill="#fbfbfb"/><path d="M6 6.3 H17.9 V15.3 H7.2 Q6 15.3 6 14.1 Z" fill="#cbcbcb"/></svg>
</div></div>
<div class="half" style="left:720px"><div class="sc" style="left:-720px">
<div style="left:720px;top:0px;width:720px;height:760px;background:radial-gradient(ellipse 380px 420px at 430px 560px,rgba(178,205,226,.55) 0%,rgba(178,205,226,0) 100%),linear-gradient(to bottom,rgba(168,196,219,0) 0%,rgba(168,196,219,.45) 45%,rgba(166,194,218,.9) 100%),linear-gradient(to right,#a9c9de 0%,#a0c1d9 40%,#8eb3d1 70%,#80a9cb 100%);"></div>
<svg style="left:0px;top:0px;" width="1440" height="760" viewBox="0 0 1440 760">
<defs>
<linearGradient id="lA" gradientUnits="userSpaceOnUse" x1="1100" y1="440" x2="1240" y2="700"><stop offset="0" stop-color="#114bc8"/><stop offset="0.5" stop-color="#0e43bc"/><stop offset="1" stop-color="#0b3aa8"/></linearGradient>
<linearGradient id="lB" gradientUnits="userSpaceOnUse" x1="925" y1="648" x2="1100" y2="700"><stop offset="0" stop-color="#0f5ed4"/><stop offset="0.35" stop-color="#1276e4"/><stop offset="0.8" stop-color="#1270e0"/><stop offset="1" stop-color="#0e4cc0"/></linearGradient>
<filter id="lb1" x="-5%" y="-5%" width="110%" height="110%"><feGaussianBlur stdDeviation="0.8"/></filter>
<filter id="lb4" x="-60%" y="-60%" width="220%" height="220%"><feGaussianBlur stdDeviation="4"/></filter>
<filter id="lb2" x="-20%" y="-20%" width="140%" height="140%"><feGaussianBlur stdDeviation="2"/></filter>
<linearGradient id="lIn" gradientUnits="userSpaceOnUse" x1="1190" y1="600" x2="1100" y2="700"><stop offset="0" stop-color="#0e3cae"/><stop offset=".5" stop-color="#0a2d94"/><stop offset="1" stop-color="#072276"/></linearGradient>
</defs>
<ellipse cx="841" cy="66.3" rx="27" ry="5" fill="#2b8ee8" filter="url(#lb1)"/>
<clipPath id="blobclip"><path d="M1100 431 C1120 437 1142 449 1168 468 C1185 481 1196 491 1203 498 C1215 512 1222 524 1227 537 C1234 552 1237 565 1237.500 576 C1238 588 1237 598 1236 607 C1232 625 1228 640 1222 654 C1214 670 1209 680 1203 689 C1198 698 1192 706 1186 716 L1100 716 Z"/></clipPath>
<path d="M1100 431 C1120 437 1142 449 1168 468 C1185 481 1196 491 1203 498 C1215 512 1222 524 1227 537 C1234 552 1237 565 1237.500 576 C1238 588 1237 598 1236 607 C1232 625 1228 640 1222 654 C1214 670 1209 680 1203 689 C1198 698 1192 706 1186 716 L1100 716 Z" fill="url(#lA)" filter="url(#lb1)"/>
<g clip-path="url(#blobclip)">
<path d="M1100 431 C1120 437 1142 449 1168 468 C1185 481 1196 491 1203 498 C1215 512 1222 524 1227 537 C1234 552 1237 565 1237.500 576 C1238 588 1237 598 1236 607 C1232 625 1228 640 1222 654 C1214 670 1209 680 1203 689 C1198 698 1192 706 1186 716" fill="none" stroke="#0a34a2" stroke-width="14" opacity=".75" filter="url(#lb2)"/>
<ellipse cx="1190" cy="600" rx="34" ry="60" fill="#1556cc" opacity=".6" filter="url(#lb4)"/>
<path d="M1100 456 C1140 470 1180 505 1200 560" fill="none" stroke="#0a38a8" stroke-width="3" opacity=".5" filter="url(#lb2)"/>
<path d="M1100 578 C1120 580 1141 588 1168 613 C1180 626 1192 645 1196 660 C1198 672 1192 680 1186 684 C1176 694 1168 704 1160 716 L1100 716 Z" fill="url(#lIn)" filter="url(#lb1)"/>
<path d="M1100 561 C1122 566 1142 580 1154 598 C1140 588 1120 581 1100 578 Z" fill="#2a6cda" filter="url(#lb1)"/>
<path d="M1100 578 C1120 580 1141 588 1168 613 C1180 626 1192 645 1196 660" fill="none" stroke="#1c5cd0" stroke-width="1.6" opacity=".7" filter="url(#lb1)"/>
</g>
<!-- under window -->
<rect x="720" y="640" width="390" height="76" fill="url(#lB)"/>
<path d="M925 648 L948 648 C942 655 934 662 925 668 Z" fill="#0c3ea8" filter="url(#lb1)"/>
<path d="M960 716 C985 702 1020 690 1050 686 C1070 683 1085 682 1097 682 C1100 692 1100 704 1096 716 Z" fill="#07237e" filter="url(#lb4)"/>
<path d="M1040 716 C1050 700 1070 688 1097 682 L1100 716 Z" fill="#041658" filter="url(#lb4)"/>
<linearGradient id="lFade" gradientUnits="userSpaceOnUse" x1="1095" y1="0" x2="1150" y2="0"><stop offset="0" stop-color="#0a2f9a"/><stop offset=".45" stop-color="#0a2f9a" stop-opacity=".9"/><stop offset="1" stop-color="#0a2f9a" stop-opacity="0"/></linearGradient>
<path d="M1095 640 L1150 640 L1150 716 L1095 716 Z" fill="url(#lFade)"/>
<path d="M1093 650 C1092 668 1096 680 1106 685 C1118 690 1126 697 1124 705 C1123 710 1120 714 1118 716 L1090 716 C1096 704 1098 692 1094 680 C1091 672 1091 660 1093 650 Z" fill="#154fc0" filter="url(#lb1)"/>
</svg>
<svg style="left:1180px;top:27px;" width="60" height="60" viewBox="0 0 60 60"><defs><clipPath id="nc"><circle cx="30" cy="30" r="28.5"/></clipPath></defs>
<path d="M5.5 17 A28 28 0 0 0 6 44" stroke="#44596b" stroke-width="3.2" fill="none"/>
<path d="M54.5 17 A28 28 0 0 1 54 44" stroke="#44596b" stroke-width="3.2" fill="none"/>
<g clip-path="url(#nc)"><path d="M11 8 Q30 -6 49 10 Q52 26 46 32 Q40 30 34 27 Q22 16 11 8Z" fill="#44596b"/><path d="M12 34 Q20 26 30 33 Q40 42 46 54 Q30 64 12 54 Q6 44 12 34Z" fill="#44596b"/></g></svg>
<div class="t" style="left:1252px;top:33.8px;line-height:50px;font-size:45.5px;color:#44596b;letter-spacing:1.71px;-webkit-text-stroke:0.8px #44596b;">Neowin</div>
<div style="left:331px;top:63px;width:777px;height:585px;background:#ffffff;border-radius:8px;box-shadow:0 0 0 1px rgba(120,130,140,.45),0 5px 16px rgba(0,0,0,.30);"></div>
<div style="left:331px;top:63px;width:777px;height:585px;border-radius:8px;overflow:hidden;"><div style="left:0px;top:0px;width:777px;height:38px;background:#e9e9e9;"></div>
<div style="left:0px;top:38px;width:777px;height:49px;background:#f8f8f8;"></div>
<div style="left:0px;top:87px;width:777px;height:1px;background:#e3e3e3;"></div>
<div style="left:0px;top:38px;width:777px;height:1px;background:#dedede;"></div>
<div style="left:0px;top:88px;width:777px;height:45px;background:#fcfcfc;"></div>
<div style="left:0px;top:133px;width:777px;height:1px;background:#e3e3e3;"></div>
<div style="left:0px;top:134px;width:777px;height:427px;background:#ffffff;"></div>
<div style="left:0px;top:561px;width:777px;height:24px;background:#ffffff;"></div>
</div>
<svg style="left:989px;top:71px;" width="12" height="12" viewBox="0 0 12 12"><path d="M1 6.5 H11" stroke="#5c5c5c" stroke-width="1"/></svg>
<svg style="left:1034px;top:71px;" width="12" height="12" viewBox="0 0 12 12"><rect x="1.5" y="1.5" width="9" height="9" rx="1" stroke="#5c5c5c" stroke-width="1" fill="none"/></svg>
<svg style="left:1079px;top:71px;" width="12" height="12" viewBox="0 0 12 12"><path d="M1 1 L11 11 M11 1 L1 11" stroke="#5c5c5c" stroke-width="1" fill="none"/></svg>
<div style="left:942px;top:110px;width:155px;height:31px;background:#fdfdfd;border-radius:4px;"></div>
<div class="t" style="left:955.8px;top:115.5px;line-height:20px;font-size:14px;color:#5d5d5d;letter-spacing:-0.36px;">Search Desktop</div>
<svg style="left:1072px;top:119.5px;" width="13" height="13" viewBox="0 0 13 13"><circle cx="5" cy="5" r="3.7" stroke="#5d5d5d" stroke-width="1.4" fill="none"/><path d="M7.800 7.800 L11.2 11.2" stroke="#5d5d5d" stroke-width="1.6" stroke-linecap="round"/></svg>
<svg style="left:1026px;top:168px;" width="16" height="12" viewBox="0 0 16 12"><rect x="0.6" y="0.6" width="14.8" height="10.8" rx="2.2" stroke="#1b1b1b" stroke-width="1.1" fill="none"/><path d="M9.5 0.6 H13.2 A2.2 2.2 0 0 1 15.4 2.8 V9.2 A2.2 2.2 0 0 1 13.2 11.4 H9.5 Z" fill="#cfe6f5" stroke="#2a7fb2" stroke-width="1.1"/><path d="M11.3 3.8 H13.6 M11.3 6 H13.6 M11.3 8.2 H13.6" stroke="#2a7fb2" stroke-width=".8"/></svg>
<div class="t" style="left:1050.3px;top:165.2px;line-height:20px;font-size:12px;color:#1b1b1b;letter-spacing:-0.14px;">Details</div>
<svg style="left:918px;top:172px;" width="16" height="6" viewBox="0 0 16 6"><circle cx="6.5" cy="3" r="1.3" fill="#1b1b1b"/><circle cx="11.5" cy="3" r="1.3" fill="#1b1b1b"/></svg>
<div class="t" style="left:905.7px;top:199.5px;line-height:20px;font-size:12px;color:#4b5d78;">Type</div>
<div style="left:1020px;top:197px;width:1px;height:25px;background:#e5e5e5;"></div>
<div class="t" style="left:1027.5px;top:199.5px;line-height:20px;font-size:12px;color:#4b5d78;letter-spacing:-0.94px;">Size</div>
<div style="left:1099px;top:197px;width:1px;height:25px;background:#e5e5e5;"></div>
<div style="left:919px;top:609px;width:188px;height:15px;background:#f0f0f0;"></div>
<div style="left:919px;top:615.5px;width:170px;height:2px;background:#858585;border-radius:1px;"></div>
<div style="left:1057px;top:624px;width:23px;height:24px;background:#e0eef7;box-sizing:border-box;border:1px solid #3c86ac;border-bottom:none;"></div>
<svg style="left:1062px;top:631px;" width="13" height="12" viewBox="0 0 13 12"><path d="M0.5 1.5 H12.5 M0.5 4.5 H12.5 M0.5 7.5 H12.5 M0.5 10.5 H12.5" stroke="#444" stroke-width="1"/></svg>
<svg style="left:1086px;top:630px;" width="13" height="13" viewBox="0 0 13 13"><rect x="1" y="1" width="11" height="8.5" stroke="#444" stroke-width="1" fill="none"/><path d="M1 12 H12" stroke="#444" stroke-width="1"/></svg>
<div style="left:720px;top:110px;width:212px;height:31px;background:#fdfdfd;border-radius:0 4px 4px 0;"></div>
<div class="t" style="left:686.7px;top:115.5px;line-height:20px;font-size:14px;color:#1b1b1b;letter-spacing:-0.19px;">Desktop</div>
<div style="left:543px;top:130px;width:376px;height:420px;background:#efefef;border-radius:8px;box-shadow:0 0 0 1px rgba(150,150,150,.6),0 8px 24px rgba(0,0,0,.3);overflow:hidden;"><div style="left:0px;top:0px;width:376px;height:29px;background:#f4f4f4;"></div>
</div>
<div style="left:549px;top:186.4px;width:362px;height:331px;background:#fafafa;box-sizing:border-box;border:1px solid #dcdcdc;"></div>
<svg style="left:898px;top:138px;" width="12" height="12" viewBox="0 0 12 12"><path d="M1 1 L11 11 M11 1 L1 11" stroke="#8a8a8a" stroke-width="1" fill="none"/></svg>
<div style="left:672px;top:199.8px;width:216px;height:20px;background:#ffffff;box-sizing:border-box;border:1px solid #c8c8c8;border-radius:3px;"></div>
<svg style="left:874px;top:206px;" width="10" height="7" viewBox="0 0 10 7"><path d="M1 1.2 L5 5.2 L9 1.2" stroke="#555" stroke-width="1" fill="none"/></svg>
<div style="left:563.5px;top:230px;width:325.5px;height:53.5px;box-sizing:border-box;border:1px solid #dcdcdc;"></div>
<div style="left:563.5px;top:302px;width:325.5px;height:89.5px;box-sizing:border-box;border:1px solid #dcdcdc;"></div>
<div style="left:563.5px;top:410.5px;width:325.5px;height:109.5px;box-sizing:border-box;border:1px solid #dcdcdc;"></div>
<div class="t" style="left:630px;top:236.9px;line-height:20px;font-size:11px;color:#000000;letter-spacing:-0.24px;">Open each folder in the same window</div>
<div class="t" style="left:630px;top:257.5px;line-height:20px;font-size:11px;color:#000000;letter-spacing:-0.22px;">Open each folder in its own window</div>
<div class="t" style="left:630px;top:312.2px;line-height:20px;font-size:11px;color:#000000;letter-spacing:-0.21px;">Single-click to open an item (point to select)</div>
<div class="t" style="left:649.2px;top:329.9px;line-height:20px;font-size:11px;color:#7e7e7e;letter-spacing:-0.27px;">Underline icon titles consistent with my browser</div>
<div class="t" style="left:649.2px;top:348px;line-height:20px;font-size:11px;color:#7e7e7e;letter-spacing:-0.24px;">Underline icon titles only when I point at them</div>
<div class="t" style="left:630px;top:365.8px;line-height:20px;font-size:11px;color:#000000;letter-spacing:-0.19px;">Double-click to open an item (single-click to select)</div>
<div class="t" style="left:630px;top:417.2px;line-height:20px;font-size:11px;color:#000000;letter-spacing:-0.26px;">Show recently used files</div>
<div class="t" style="left:630px;top:437.7px;line-height:20px;font-size:11px;color:#000000;letter-spacing:-0.28px;">Show frequently used folders</div>
<div class="t" style="left:630px;top:458.3px;line-height:20px;font-size:11px;color:#000000;letter-spacing:-0.28px;">Show recommended section</div>
<div class="t" style="left:630px;top:478.7px;line-height:20px;font-size:11px;color:#000000;letter-spacing:-0.19px;">Show files based on your account and cloud provider</div>
<div style="left:535px;top:497.5px;width:394px;height:202.0px;background:#ffffff;border-radius:8px;overflow:hidden;box-shadow:0 0 0 1px rgba(140,140,140,.55),0 12px 32px rgba(0,0,0,.38);"><div style="left:0px;top:0px;width:394px;height:31px;background:#f3f4f8;"></div>
<div style="left:0px;top:31px;width:394px;height:111.5px;background:#ffffff;"></div>
<div style="left:0px;top:142.5px;width:394px;height:59.5px;background:#f1f1f1;"></div>
</div>
<div class="t" style="left:598.2px;top:545.5px;line-height:20px;font-size:12px;color:#111111;letter-spacing:-0.02px;">Type the name of a program, folder, document, or Internet</div>
<div class="t" style="left:598.2px;top:560.5px;line-height:20px;font-size:12px;color:#111111;letter-spacing:-0.06px;">resource, and Windows will open it for you.</div>
<div style="left:598px;top:596px;width:317px;height:22.5px;background:#ffffff;box-sizing:border-box;border:1px solid #2f7aa6;border-radius:3px;"></div>
<div style="left:599px;top:598px;width:296px;height:19px;background:#ededed;"></div>
<svg style="left:900px;top:604px;" width="11" height="7" viewBox="0 0 11 7"><path d="M1 1 L5.5 5.5 L10 1" stroke="#555" stroke-width="1.1" fill="none"/></svg>
<svg style="left:908px;top:505.5px;" width="12" height="12" viewBox="0 0 12 12"><path d="M1 1 L11 11 M11 1 L1 11" stroke="#1b1b1b" stroke-width="1.1" fill="none"/></svg>
<div style="left:645px;top:658px;width:84px;height:23.5px;background:#f9f9f9;box-sizing:border-box;border:1px solid #e9e9e9;border-radius:4px;"></div>
<div style="left:738.5px;top:658px;width:84px;height:23.5px;background:#fdfdfd;box-sizing:border-box;border:1px solid #d0d0d0;border-radius:4px;"></div>
<div style="left:832.5px;top:658px;width:84px;height:23.5px;background:#fdfdfd;box-sizing:border-box;border:1px solid #d0d0d0;border-radius:4px;"></div>
<div class="t" style="left:762.5px;top:659.8px;line-height:20px;font-size:12px;color:#111111;letter-spacing:-0.24px;">Cancel</div>
<div class="t" style="left:850.8px;top:659.8px;line-height:20px;font-size:12px;color:#111111;letter-spacing:-0.35px;"><u>B</u>rowse...</div>
<div style="left:0px;top:712px;width:1440px;height:48px;background:linear-gradient(90deg,#dbe1f3 0%,#dbe1f3 50%,#dce3f3 70%,#e4ecf6 86%,#e6eef6 100%);"></div>
<div style="left:0px;top:712px;width:1440px;height:1px;background:rgba(255,255,255,.5);"></div>
<div style="left:965.7px;top:717.7px;width:37.5px;height:37.3px;background:rgba(248,250,255,.78);border-radius:5px;box-shadow:0 0 0 1px rgba(255,255,255,.35);"></div>
<svg style="left:753px;top:724px;" width="27" height="24" viewBox="0 0 27 24"><defs>
<linearGradient id="gcpl" x1="0" y1="0" x2="0" y2="1"><stop offset="0" stop-color="#2a7be8"/><stop offset=".4" stop-color="#2fc0e0"/><stop offset=".75" stop-color="#8fd65a"/><stop offset="1" stop-color="#f4d43a"/></linearGradient>
<linearGradient id="gcpr" x1="0" y1="0" x2="0" y2="1"><stop offset="0" stop-color="#9a5af0"/><stop offset=".5" stop-color="#d458d8"/><stop offset="1" stop-color="#f2589a"/></linearGradient></defs>
<path d="M4.5 1 H11 Q14.2 1 15.2 4 L16 6.5 Q13 6.5 11.8 9.5 L10.2 14 Q9.2 17 6 17 H3.6 Q0.6 17 1.3 13.6 L2.4 4 Q2.8 1 4.5 1Z" fill="url(#gcpl)"/>
<path d="M12 1 H16.5 Q19.5 1 20.3 4 L21 6.6 H16 L15.2 4 Q14.2 1 12 1Z" fill="#1d4fd0"/>
<path d="M17.2 6.6 H22.6 Q25.8 6.6 25 10 L23.8 14.6 Q23 17 20.4 17 H12 Q14 16.6 14.8 14 L16.2 9.4 Q16.8 7.2 17.2 6.6Z" fill="url(#gcpr)"/>
<rect x="6.3" y="17.2" width="19.4" height="6.6" rx=".6" fill="#0d0d0d"/></svg>
<div class="t" style="left:760.5px;top:740.6px;line-height:8px;font-size:6.5px;font-weight:700;color:#ffffff;letter-spacing:0.08px;">M365</div>
<svg style="left:797.5px;top:724px;" width="25.5" height="23" viewBox="0 0 25.5 23"><defs><linearGradient id="gfo" x1="0" y1="0" x2="0" y2="1"><stop offset="0" stop-color="#ffd75c"/><stop offset="1" stop-color="#f6c030"/></linearGradient></defs>
<path d="M0.6 2.2 Q0.6 0.6 2.2 0.6 H8.2 Q9.6 0.6 10.4 1.8 L11.6 3.6 H22.9 Q24.6 3.6 24.6 5.2 V8 H0.6 Z" fill="#e2a51c"/>
<path d="M0.6 6.3 Q0.6 4.8 2.2 4.8 H22.9 Q24.6 4.8 24.6 6.3 V21 Q24.6 22.6 22.9 22.6 H2.2 Q0.6 22.6 0.6 21 Z" fill="url(#gfo)"/>
<path d="M4.2 22.6 V18 Q4.2 15.4 6.8 15.4 H17.6 Q20.2 15.4 20.2 18 V22.6 Z" fill="#1b7cc9"/><path d="M6.4 18.8 H18" stroke="#12589a" stroke-width="1.3"/></svg>
<div style="left:806.8px;top:752px;width:6.4px;height:2.7px;background:#7d8694;border-radius:1.4px;"></div>
<svg style="left:841.5px;top:723.6px;" width="25" height="24.6" viewBox="0 0 25 24.6"><defs>
<linearGradient id="ged1" x1="0" y1="0" x2=".3" y2="1"><stop offset="0" stop-color="#2398dc"/><stop offset=".55" stop-color="#1575c8"/><stop offset="1" stop-color="#0c4fa0"/></linearGradient>
<linearGradient id="ged2" x1="0" y1=".3" x2="1" y2=".6"><stop offset="0" stop-color="#1e8ad8"/><stop offset=".5" stop-color="#2cb4d0"/><stop offset="1" stop-color="#74e858"/></linearGradient>
<clipPath id="gedc"><circle cx="12.5" cy="12.3" r="12.2"/></clipPath></defs>
<g clip-path="url(#gedc)">
<rect x="0" y="0" width="25" height="25" fill="url(#ged1)"/>
<path d="M-1 12 L-1 -1 L26 -1 L26 15.6 Q21 17.6 17.6 16 Q16.2 15 16.6 13.2 Q16.4 9.600 12.6 9.600 Q7 9.400 4 14 Q1.4 17.6 2.400 21 Q-1 17 -1 12Z" fill="url(#ged2)"/>
<path d="M4 14 Q1.6 18.400 4.400 22 Q8.400 26.400 15.4 24.8 Q19.6 23.8 21.6 21 Q14.6 22.6 11 18.8 Q8.600 15.600 10.4 11.8 Q6.400 11 4 14Z" fill="#0c4c9c" opacity=".9"/>
<path d="M13.2 10.2 A3.3 3.3 0 0 0 10.1 14.2 Q10.7 18.4 15.6 19 Q19 19.4 21.85 20.14 L26 21 L26 14 L24.5 14.5 Q20.5 16.7 17.4 15.9 Q16.2 15.3 16.5 13.5 A3.3 3.3 0 0 0 13.2 10.2 Z" fill="#e2e9f6"/>
</g></svg>
<svg style="left:884.5px;top:724px;" width="24" height="24.5" viewBox="0 0 24 24.5"><path d="M6.6 5.2 V3.6 Q6.6 1.2 9 1.2 H15 Q17.4 1.2 17.4 3.6 V5.2" stroke="#48b4ea" stroke-width="1.7" fill="none"/><path d="M0.4 4.6 H23.6 V19.6 Q23.6 24.2 19 24.2 H5 Q0.4 24.2 0.4 19.6 Z" fill="#134f8e"/><rect x="7.4" y="10" width="4.2" height="4.2" fill="#f1511b"/><rect x="12.4" y="10" width="4.2" height="4.2" fill="#80cc28"/><rect x="7.4" y="15" width="4.2" height="4.2" fill="#00adef"/><rect x="12.4" y="15" width="4.2" height="4.2" fill="#fbbc09"/></svg>
<svg style="left:928.8px;top:727px;" width="24.4" height="18" viewBox="0 0 24.4 18"><rect x="0.5" y="0.5" width="23.4" height="17" rx="1.2" fill="#8ed6f8" stroke="#3aa6e4" stroke-width="1.2"/><circle cx="7.6" cy="7.5" r="4.5" fill="#1c78c2"/><path d="M7.6 7.5 V2.6 A4.9 4.9 0 0 1 12.5 7.5 Z" fill="#f2a030"/><path d="M7.6 7.5 H12.5" stroke="#fff" stroke-width="1"/><path d="M13.5 6.4 H16 V4 H18.4 M18.4 8.6 H20.6 M17.6 10.6 L19.4 11.8" stroke="#1c78c2" stroke-width="1" fill="none"/><circle cx="19.6" cy="4.4" r="1.4" fill="#fff"/><circle cx="20" cy="8" r="1.2" fill="#fff"/><circle cx="18" cy="11.4" r="1.2" fill="#fff"/><path d="M3 14.3 H9.4" stroke="#f2a030" stroke-width="1.4"/><path d="M11.4 14.3 H13" stroke="#fff" stroke-width="1.4"/><path d="M13 14.3 H21" stroke="#1c78c2" stroke-width="1.4"/></svg>
<div style="left:938px;top:752px;width:6px;height:2.7px;background:#7d8694;border-radius:1.4px;"></div>
<svg style="left:973.2px;top:728.6px;" width="22" height="14.6" viewBox="0 0 22 14.6"><path d="M4.6 0.8 H21.4 L18.6 13.8 H1.4 Z" fill="#8fd6f6" stroke="#3fa6dc" stroke-width="1.1"/><path d="M6.6 2.9 H18.9 L17 11.7 H4.2 Z" fill="#c4ebfc" stroke="#58b6e4" stroke-width=".8"/><path d="M8.6 5.2 H16.6 L15.8 9.2 H7.8 Z" fill="#ffffff" stroke="#3a9ad2" stroke-width=".8"/><path d="M0.2 4 H2.4 M0 7 H1.7 M0 10 H1" stroke="#58b6e4" stroke-width=".9"/></svg>
<div style="left:976.8px;top:752px;width:15.4px;height:2.8px;background:#1a6fc6;border-radius:1.4px;"></div>
<svg style="left:1241.5px;top:731.5px;" width="13" height="9" viewBox="0 0 13 9"><path d="M1.6 7.2 L6.4 2.2 L11.2 7.2" stroke="#1b1b1b" stroke-width="1.4" fill="none"/></svg>
<svg style="left:1270px;top:728px;" width="20" height="17" viewBox="0 0 20 17"><defs><linearGradient id="gcl" x1="0" y1="0" x2="0" y2="1"><stop offset="0" stop-color="#dcdcdc"/><stop offset="1" stop-color="#a4a4a4"/></linearGradient></defs><path d="M5 12.2 A3.7 3.7 0 0 1 4.5 4.9 A5 5 0 0 1 13.6 4.2 A3.6 3.6 0 0 1 16 8 L12 12.2 Z" stroke="#3c3c3c" stroke-width="1.2" fill="url(#gcl)"/><circle cx="13.2" cy="11.8" r="4.7" fill="#1a78d8"/><path d="M13.2 10.8 V14.2" stroke="#fff" stroke-width="1.3"/><circle cx="13.2" cy="9.2" r=".85" fill="#fff"/></svg>
<svg style="left:1302.5px;top:727px;" width="19" height="18" viewBox="0 0 19 18"><path d="M11 2 H2 Q1 2 1 3 V12 Q1 13 2 13 H11" stroke="#1b1b1b" stroke-width="1.2" fill="none"/><path d="M4 16.5 H11.5 M6.2 13 V16.5 M9.4 13 V16.5" stroke="#1b1b1b" stroke-width="1.2"/><rect x="13" y="1.2" width="3.4" height="5.6" rx="1.2" stroke="#1b1b1b" stroke-width="1.1" fill="none"/><path d="M14.7 6.8 V16.8" stroke="#1b1b1b" stroke-width="1.2"/></svg>
<svg style="left:1326px;top:728px;" width="19" height="17" viewBox="0 0 19 17"><path d="M1.5 6 H4.5 L8.5 2.5 V14.5 L4.5 11 H1.5 Z" stroke="#1b1b1b" stroke-width="1.1" fill="none" stroke-linejoin="round"/><path d="M11 6 Q12.4 8.5 11 11 M13.2 4 Q15.6 8.5 13.2 13 M15.4 2.2 Q18.6 8.5 15.4 14.8" stroke="#1b1b1b" stroke-width="1.1" fill="none" stroke-linecap="round"/></svg>
<div class="t" style="left:1378px;top:718.5px;line-height:20px;font-size:11px;color:#1b1b1b;letter-spacing:0.26px;">2:32 PM</div>
<div class="t" style="left:1360.3px;top:734.1px;line-height:20px;font-size:11px;color:#1b1b1b;letter-spacing:0.54px;">10/26/2025</div>
<svg style="left:711px;top:725px;" width="24" height="23" viewBox="0 0 24 23"><rect x="0.2" y="6.3" width="17.7" height="15.7" rx="0.8" fill="#6b6b70"/><rect x="8.9" y="15.3" width="9" height="6.7" fill="#141414"/><rect x="6" y="0.4" width="17.1" height="14.9" rx="1.2" fill="#fbfbfb"/><path d="M6 6.3 H17.9 V15.3 H7.2 Q6 15.3 6 14.1 Z" fill="#cbcbcb"/></svg>
</div></div>
</body></html>
